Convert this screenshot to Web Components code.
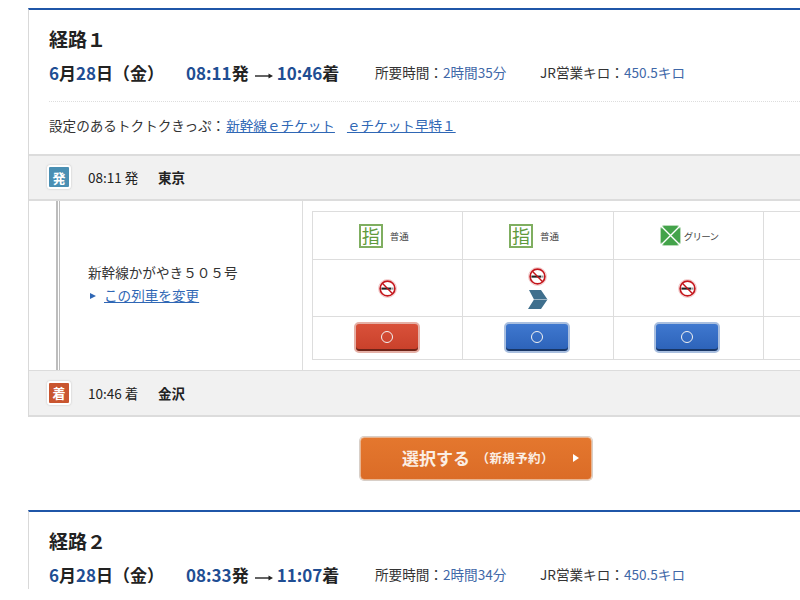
<!DOCTYPE html>
<html lang="ja">
<head>
<meta charset="utf-8">
<title>経路</title>
<style>
  html, body { margin: 0; height: 600px; overflow: hidden; background: #fff; }
  body { font-family: "Noto Sans CJK JP", "Noto Sans", sans-serif; color: #222; }
</style>
</head>
<body>
<route-list>
  <route-card>
    <route-header label="経路１" dep="08:11" arr="10:46" time="2時間35分" km="450.5"></route-header>
    <ticket-links slot="tickets">
      <a href="#">新幹線ｅチケット</a>
      <a href="#">ｅチケット早特１</a>
    </ticket-links>
    <station-bar slot="legs" kind="dep" time="08:11" name="東京"></station-bar>
    <train-leg slot="legs" train="新幹線かがやき５０５号">
      <seat-col seat="reserved" label="普通" mark="red"></seat-col>
      <seat-col seat="reserved" label="普通" mark="blue" gran="1"></seat-col>
      <seat-col seat="green" label="グリーン" mark="blue"></seat-col>
      <seat-col></seat-col>
    </train-leg>
    <station-bar slot="legs" kind="arr" time="10:46" name="金沢"></station-bar>
  </route-card>
  <select-button>選択する<small>（新規予約）</small></select-button>
  <route-card>
    <route-header label="経路２" dep="08:33" arr="11:07" time="2時間34分" km="450.5"></route-header>
  </route-card>
</route-list>

<script>
const NO_SMOKING = `
  <svg width="19" height="19" viewBox="0 0 20 20" aria-hidden="true">
    <circle cx="10" cy="10" r="9.4" fill="#fff" stroke="#f0c4c4" stroke-width="1"/>
    <circle cx="10" cy="10" r="7.8" fill="#fff" stroke="#c4161c" stroke-width="1.8"/>
    <rect x="3.6" y="9" width="10.4" height="2.2" fill="#222"/>
    <rect x="14.4" y="9" width="2" height="2.2" fill="#999"/>
    <path d="M4.6 4.6 15.4 15.4" stroke="#c4161c" stroke-width="1.5"/>
  </svg>`;

class RouteList extends HTMLElement {
  constructor() {
    super();
    this.attachShadow({ mode: 'open' });
    this.shadowRoot.innerHTML = `
      <style>
        :host { display: flex; flex-direction: column; box-sizing: border-box; width: 800px; padding: 8px 0 0 28px; }
      </style>
      <slot></slot>`;
  }
}

class RouteCard extends HTMLElement {
  constructor() {
    super();
    this.attachShadow({ mode: 'open' });
    this.shadowRoot.innerHTML = `
      <style>
        :host { display: block; border-top: 2px solid #1f56a8; border-left: 1px solid #d9d9d9; }
        .head { padding: 0 0 0 20px; }
        .foot { display: block; }
      </style>
      <div class="head">
        <slot></slot>
        <slot name="tickets"></slot>
      </div>
      <div class="foot"><slot name="legs"></slot></div>`;
  }
}

class RouteHeader extends HTMLElement {
  constructor() {
    super();
    this.attachShadow({ mode: 'open' });
    const a = (n) => this.getAttribute(n);
    this.shadowRoot.innerHTML = `
      <style>
        :host { display: block; }
        h2 { margin: 0; padding-top: 14px; font-size: 19px; line-height: 30px; font-weight: 700; color: #222; }
        .row { display: flex; align-items: center; height: 30px; margin-top: 3px; white-space: nowrap; }
        .big { font-size: 17px; font-weight: 700; color: #222; }
        .big b { color: #1f4e93; font-weight: 700; }
        .date { width: 137px; }
        .arrow { margin: 7px 4px 0 6px; display: block; }
        .times { display: flex; align-items: center; width: 189px; }
        .info { font-size: 13.6px; color: #333; width: 165px; }
        .info span { color: #3f68a8; }
      </style>
      <h2>${a('label')}</h2>
      <div class="row">
        <div class="big date"><b>6</b>月<b>28</b>日（金）</div>
        <div class="big times">
          <span><b>${a('dep')}</b>発</span>
          <svg class="arrow" width="18" height="6" viewBox="0 0 18 6" aria-hidden="true"><path d="M0 3h14" stroke="#222" stroke-width="1.4"/><path d="M13.5 .6 18 3l-4.5 2.4z" fill="#222"/></svg>
          <span><b>${a('arr')}</b>着</span>
        </div>
        <div class="info">所要時間：<span>${a('time')}</span></div>
        <div class="info">JR営業キロ：<span>${a('km')}キロ</span></div>
      </div>`;
  }
}

class TicketLinks extends HTMLElement {
  constructor() {
    super();
    this.attachShadow({ mode: 'open' });
    this.shadowRoot.innerHTML = `
      <style>
        :host { display: flex; align-items: center; gap: 12px; box-sizing: border-box; height: 53px; margin-top: 14px; padding-bottom: 6px;
                border-top: 1px dotted #ddd; font-size: 13.6px; color: #333; white-space: nowrap; }
        ::slotted(a) { color: #2f67b5; text-decoration: underline; }
        .lead { margin-right: -11px; }
      </style>
      <span class="lead">設定のあるトクトクきっぷ：</span>
      <slot></slot>`;
  }
}

class StationBar extends HTMLElement {
  constructor() {
    super();
    this.attachShadow({ mode: 'open' });
    const isDep = this.getAttribute('kind') === 'dep';
    const mark = isDep ? '発' : '着';
    this.shadowRoot.innerHTML = `
      <style>
        :host { display: flex; align-items: center; box-sizing: border-box; height: 47px; padding: 0 0 1px 18px;
                background: #f1f1f1; border-top: 2px solid #dcdcdc; border-bottom: 2px solid #dcdcdc; font-size: 13.5px; color: #222; }
        :host([kind="arr"]) { border-top-width: 1px; height: 47px; }
        .badge { box-sizing: border-box; width: 24px; height: 24px; display: flex; align-items: center; justify-content: center;
                 color: #fff; font-size: 13px; font-weight: 700; border: 2px solid #fff; border-radius: 3px;
                 background: ${isDep ? '#4a8fb3' : '#c9552f'}; box-shadow: 0 0 2px #bbb; }
        .time { margin-left: 17px; width: 70px; }
        b { font-weight: 700; }
      </style>
      <span class="badge">${mark}</span>
      <span class="time">${this.getAttribute('time')} ${mark}</span>
      <b>${this.getAttribute('name')}</b>`;
  }
}

class TrainLeg extends HTMLElement {
  constructor() {
    super();
    this.attachShadow({ mode: 'open' });
    this.shadowRoot.innerHTML = `
      <style>
        :host { display: flex; height: 169px; }
        .line { flex: none; margin-left: 27px; width: 4px; box-sizing: border-box; border-left: 2px solid #bdbdbd; border-right: 1px solid #bdbdbd; }
        .train { flex: none; box-sizing: border-box; width: 243px; padding: 60px 0 0 28px; border-right: 1px solid #ddd; font-size: 13.6px; line-height: 23px; color: #333; }
        .change { display: flex; align-items: center; gap: 8px; padding-left: 2px; }
        .change a { color: #2f67b5; }
        .change i { border-left: 6px solid #2f67b5; border-top: 3.5px solid transparent; border-bottom: 3.5px solid transparent; }
        .wrap { flex: 1; min-width: 0; overflow: hidden; padding: 10px 0 0 9px; }
        .grid { display: flex; border-top: 1px solid #ddd; border-left: 1px solid #ddd; border-bottom: 1px solid #ddd; height: 149px; box-sizing: border-box; }
      </style>
      <div class="line"></div>
      <div class="train">
        <div>${this.getAttribute('train')}</div>
        <div class="change"><i></i><a href="#">この列車を変更</a></div>
      </div>
      <div class="wrap"><div class="grid"><slot></slot></div></div>`;
  }
}

class SeatCol extends HTMLElement {
  constructor() {
    super();
    this.attachShadow({ mode: 'open' });
    const seat = this.getAttribute('seat');
    const mark = this.getAttribute('mark');
    let icon = '';
    if (seat === 'reserved') {
      icon = `<span class="shi">指</span><span class="lab">${this.getAttribute('label')}</span>`;
    } else if (seat === 'green') {
      icon = `<svg width="21" height="21" viewBox="0 0 21 21" aria-hidden="true">
          <rect x=".5" y=".5" width="20" height="20" rx="4" fill="#43a34a" stroke="#b9dcb9"/>
          <path d="M1 1 20 20M20 1 1 20" stroke="#fff" stroke-width="1.4"/>
        </svg><span class="lab green">${this.getAttribute('label')}</span>`;
    }
    const gran = this.hasAttribute('gran')
      ? `<svg width="20" height="19" viewBox="0 0 20 19" aria-hidden="true"><path d="M1 0h12l6.5 9.5L13 19H0l6-9.5z" fill="#3f6f8d"/><path d="M6 9.5h13.5" stroke="#fff" stroke-width=".5"/></svg>`
      : '';
    const smoke = seat ? NO_SMOKING : '';
    const btn = mark ? `<span class="btn ${mark}"><i></i></span>` : '';
    this.shadowRoot.innerHTML = `
      <style>
        :host { flex: none; display: grid; grid-template-rows: 47px 57px 1fr; width: 150.4px; box-sizing: border-box; border-right: 1px solid #ddd; }
        .cell { display: flex; align-items: center; justify-content: center; }
        .cell + .cell { border-top: 1px solid #ddd; }
        :host([seat="reserved"]) .top { padding-right: 8px; }
        :host([seat="green"]) .top { padding-left: 1px; }
        .smoke { flex-direction: column; gap: 4px; padding-right: 1px; }
        .act { padding: 0 2px 2px 0; }
        .shi { box-sizing: border-box; width: 24px; height: 24px; border: 2px solid #7fae60; color: #5f9a3c; background: #fff;
               font-size: 18px; font-weight: 400; line-height: 19px; text-align: center; }
        .lab { margin-left: 7px; font-size: 9.5px; color: #444; }
        .lab.green { margin-left: 3px; letter-spacing: -.8px; }
        .btn { box-sizing: border-box; width: 66px; height: 31px; display: flex; align-items: center; justify-content: center;
               border-radius: 5px; border: 2px solid; box-shadow: inset 0 -2px 0 rgba(0,0,0,.45); }
        .btn.red { background: linear-gradient(#d9513a, #c8402a); border-color: #e5b0a6; }
        .btn.blue { background: linear-gradient(#3f78cf, #2c62b8); border-color: #a9bfdf; }
        .btn i { box-sizing: border-box; width: 12px; height: 12px; border: 1.5px solid #f2f2f2; border-radius: 50%; }
      </style>
      <div class="cell top">${icon}</div>
      <div class="cell smoke">${smoke}${gran}</div>
      <div class="cell act">${btn}</div>`;
  }
}

class SelectButton extends HTMLElement {
  constructor() {
    super();
    this.attachShadow({ mode: 'open' });
    this.shadowRoot.innerHTML = `
      <style>
        :host { display: flex; align-items: center; box-sizing: border-box; width: 232px; height: 43px; margin: 20px 0 30px 332px;
                padding: 0 0 2px 41px; position: relative; color: #fbeee4; font-size: 17px; font-weight: 700; white-space: nowrap;
                background: linear-gradient(#e4772e, #db6c27); border: 1px solid #e9b48f; border-radius: 4px; box-shadow: 0 0 0 1px #d8cfc8; }
        ::slotted(small) { font-size: 12.5px; margin-left: 6.5px; letter-spacing: .4px; }
        .tri { position: absolute; right: 12px; top: 16px; border-left: 6px solid #fff; border-top: 4px solid transparent; border-bottom: 4px solid transparent; }
      </style>
      <slot></slot><span class="tri"></span>`;
  }
}

customElements.define('route-list', RouteList);
customElements.define('route-card', RouteCard);
customElements.define('route-header', RouteHeader);
customElements.define('ticket-links', TicketLinks);
customElements.define('station-bar', StationBar);
customElements.define('train-leg', TrainLeg);
customElements.define('seat-col', SeatCol);
customElements.define('select-button', SelectButton);
</script>
</body>
</html>
